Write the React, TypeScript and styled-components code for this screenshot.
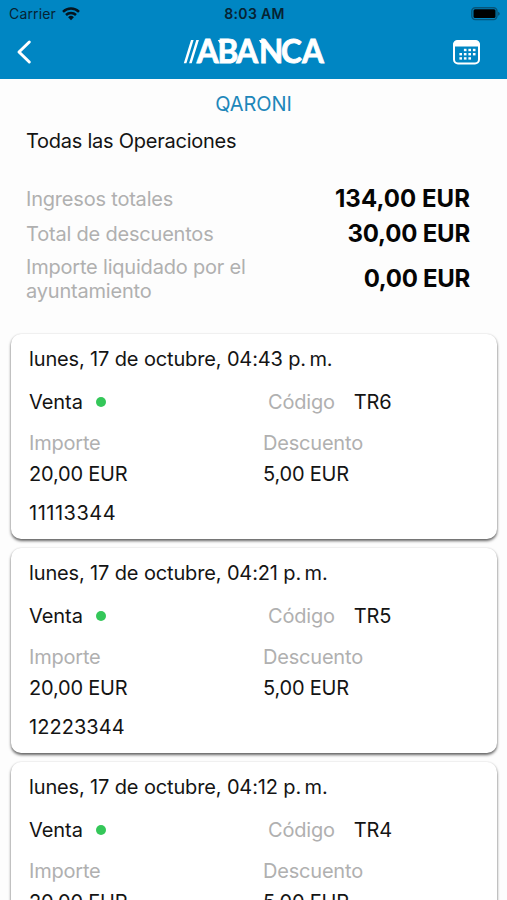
import React from "react";
import styled, { createGlobalStyle } from "styled-components";

const GlobalStyle = createGlobalStyle`
  * { box-sizing: border-box; }
  html, body { margin: 0; padding: 0; background: #fff; }
  body { overflow: hidden; font-family: Inter, "Liberation Sans", sans-serif; color: #141414; }
`;

const Screen = styled.main`
  width: 507px;
  height: 900px;
  overflow: hidden;
  background: #fdfdfd;
`;

const Header = styled.header`
  height: 79px;
  background: #0086c3;
`;

const StatusBar = styled.div`
  height: 28px;
  padding: 0 7px 0 9px;
  display: grid;
  grid-template-columns: 1fr auto 1fr;
  align-items: center;
  color: #062333;
  font-size: 14px;
  line-height: 28px;
`;

const Carrier = styled.div`
  display: flex;
  align-items: center;
  gap: 6px;
  letter-spacing: 0.15px;
`;

const Clock = styled.div`
  font-weight: 600;
  font-size: 14px;
  letter-spacing: 0.3px;
`;

const Battery = styled.svg`
  justify-self: end;
`;

const NavBar = styled.nav`
  height: 51px;
  padding: 10px 16px 0;
  display: grid;
  grid-template-columns: 1fr auto 1fr;
  align-items: start;
`;

const NavButton = styled.button<{ $end?: boolean }>`
  justify-self: ${(p) => (p.$end ? "end" : "start")};
  margin-right: ${(p) => (p.$end ? 11 : 0)}px;
  padding: 0;
  border: 0;
  background: none;
  display: flex;
`;

const Logo = styled.svg`
  overflow: visible;
  font-family: Lato, sans-serif;
  font-weight: 700;
`;

const Merchant = styled.h1`
  margin: 0;
  padding-top: 13px;
  text-align: center;
  color: #1d87ba;
  font-size: 20px;
  font-weight: 400;
  line-height: 24px;
  letter-spacing: -0.05px;
`;

const Summary = styled.section`
  height: 218px;
  padding: 13px 37px 0 26px;
`;

const SummaryTitle = styled.h2`
  margin: 0 0 28px;
  font-size: 20px;
  font-weight: 400;
  line-height: 24px;
  letter-spacing: -0.25px;
`;

const SummaryRow = styled.div<{ $height: number }>`
  height: ${(p) => p.$height}px;
  display: flex;
  align-items: center;
  justify-content: space-between;
`;

const SummaryLabel = styled.span`
  width: 250px;
  color: #b0b0b0;
  font-size: 20px;
  line-height: 24px;
  letter-spacing: -0.2px;
`;

const SummaryAmount = styled.strong<{ $tracking: number }>`
  color: #050505;
  font-size: 24px;
  font-weight: 700;
  line-height: 30px;
  letter-spacing: ${(p) => p.$tracking}px;
  white-space: nowrap;
`;

const CardList = styled.section`
  padding: 0 10px 0 11px;
  display: flex;
  flex-direction: column;
  gap: 9px;
`;

const Card = styled.article`
  height: 205px;
  flex: none;
  padding: 13px 18px;
  border-radius: 10px;
  background: #fff;
  box-shadow: 0 2px 3px rgba(0, 0, 0, 0.6), 0 0 2px rgba(0, 0, 0, 0.12);
  font-size: 20px;
  line-height: 24px;
`;

const DateLine = styled.div`
  letter-spacing: -0.14px;
  white-space: pre;
`;

const Columns = styled.div<{ $top: number }>`
  margin-top: ${(p) => p.$top}px;
  display: grid;
  grid-template-columns: 234px 1fr;
`;

const Kind = styled.div`
  display: flex;
  align-items: center;
  gap: 13px;
  letter-spacing: -0.05px;
`;

const Dot = styled.span`
  width: 10px;
  height: 10px;
  border-radius: 50%;
  background: #34c759;
`;

const Code = styled.div`
  padding-left: 5px;
  display: flex;
  gap: 19px;
  letter-spacing: -0.1px;
`;

const Label = styled.span`
  color: #b0b0b0;
  letter-spacing: -0.2px;
`;

const Amount = styled.span`
  letter-spacing: -0.2px;
`;

const Reference = styled.div<{ $tracking: number }>`
  margin-top: 15px;
  letter-spacing: ${(p) => p.$tracking}px;
`;

const totals = [
  { label: "Ingresos totales", amount: "134,00 EUR", height: 36, tracking: 0.05 },
  { label: "Total de descuentos", amount: "30,00 EUR", height: 33, tracking: -0.2 },
  { label: "Importe liquidado por el ayuntamiento", amount: "0,00 EUR", height: 58, tracking: -0.3 },
];

const operations = [
  { time: "04:43", code: "TR6", reference: "11113344", tracking: 0.5 },
  { time: "04:21", code: "TR5", reference: "12223344", tracking: 0.05 },
  { time: "04:12", code: "TR4" },
];

const dots = [
  [12.2, 10.8], [16.7, 10.8], [21.2, 10.8],
  [7.7, 15], [12.2, 15], [16.7, 15], [21.2, 15],
  [7.7, 19.2], [12.2, 19.2], [16.7, 19.2],
];

function WifiIcon() {
  return (
    <svg width="18" height="14" viewBox="0 0 18 14" fill="none" stroke="#05151f" strokeWidth="2.5">
      <path d="M1 4.800a11.500 11.500 0 0 1 16 0" />
      <path d="M4 8a7.200 7.200 0 0 1 10 0" />
      <path d="M9 13.200 6.100 10.300a4.100 4.100 0 0 1 5.800 0z" fill="#05151f" stroke="none" />
    </svg>
  );
}

function AbancaLogo() {
  return (
    <Logo width="141" height="28" viewBox="0 0 141 28" fill="#fff">
      <path d="M8 2h2.600L3.400 25.300H.8zM13.300 2h2.600L8.700 25.300H6.100z" />
      <path d="M34.800 2h4v3h-2.200zM76 2h3v3h-1.500z" />
      <text x="13.800 34.500 53.300 76 98 119" y="25" fontSize="31.500" stroke="#fff" strokeWidth="0.800">
        ABANCA
      </text>
    </Logo>
  );
}

export default function App() {
  return (
    <Screen>
      <GlobalStyle />
      <Header>
        <StatusBar>
          <Carrier>
            Carrier
            <WifiIcon />
          </Carrier>
          <Clock>8:03 AM</Clock>
          <Battery width="29" height="14" viewBox="0 0 29 14">
            <rect x="0.800" y="0.800" width="25.200" height="11.800" rx="3.500" fill="none" stroke="#075579" strokeWidth="1.400" />
            <rect x="2.500" y="2.300" width="22" height="8.800" rx="1.500" fill="#000" />
            <path d="M27 4.700v4c1.400-.5 1.800-1.200 1.800-2S28.400 5.200 27 4.700z" fill="#075579" />
          </Battery>
        </StatusBar>
        <NavBar>
          <NavButton aria-label="Volver">
            <svg width="18" height="28" viewBox="0 0 18 28" fill="none" stroke="#fff" strokeWidth="3" strokeLinecap="round" strokeLinejoin="round">
              <path d="M13.300 4 3 14l10.300 10" />
            </svg>
          </NavButton>
          <AbancaLogo />
          <NavButton $end aria-label="Calendario">
            <svg width="27" height="28" viewBox="0 0 27 28">
              <rect x="1" y="3.500" width="25" height="22" rx="4" fill="none" stroke="#fff" strokeWidth="2" />
              <path d="M0 8.500V6.500a4.500 4.500 0 0 1 4.500-4.500h18a4.500 4.500 0 0 1 4.500 4.500v2z" fill="#fff" />
              {dots.map(([x, y]) => (
                <rect key={`${x}-${y}`} x={x - 1.300} y={y} width="2.600" height="2.400" fill="#fff" />
              ))}
            </svg>
          </NavButton>
        </NavBar>
      </Header>

      <Merchant>QARONI</Merchant>
      <Summary>
        <SummaryTitle>Todas las Operaciones</SummaryTitle>
        {totals.map((t) => (
          <SummaryRow key={t.label} $height={t.height}>
            <SummaryLabel>{t.label}</SummaryLabel>
            <SummaryAmount $tracking={t.tracking}>{t.amount}</SummaryAmount>
          </SummaryRow>
        ))}
      </Summary>

      <CardList>
        {operations.map((op) => (
          <Card key={op.code}>
            <DateLine>{`lunes, 17 de octubre, ${op.time} p.\u2009m.`}</DateLine>
            <Columns $top={19}>
              <Kind>
                Venta
                <Dot />
              </Kind>
              <Code>
                <Label>Código</Label>
                {op.code}
              </Code>
            </Columns>
            <Columns $top={17}>
              <Label>Importe</Label>
              <Label>Descuento</Label>
            </Columns>
            <Columns $top={7}>
              <Amount>20,00 EUR</Amount>
              <Amount>5,00 EUR</Amount>
            </Columns>
            {op.reference && <Reference $tracking={op.tracking ?? 0}>{op.reference}</Reference>}
          </Card>
        ))}
      </CardList>
    </Screen>
  );
}
